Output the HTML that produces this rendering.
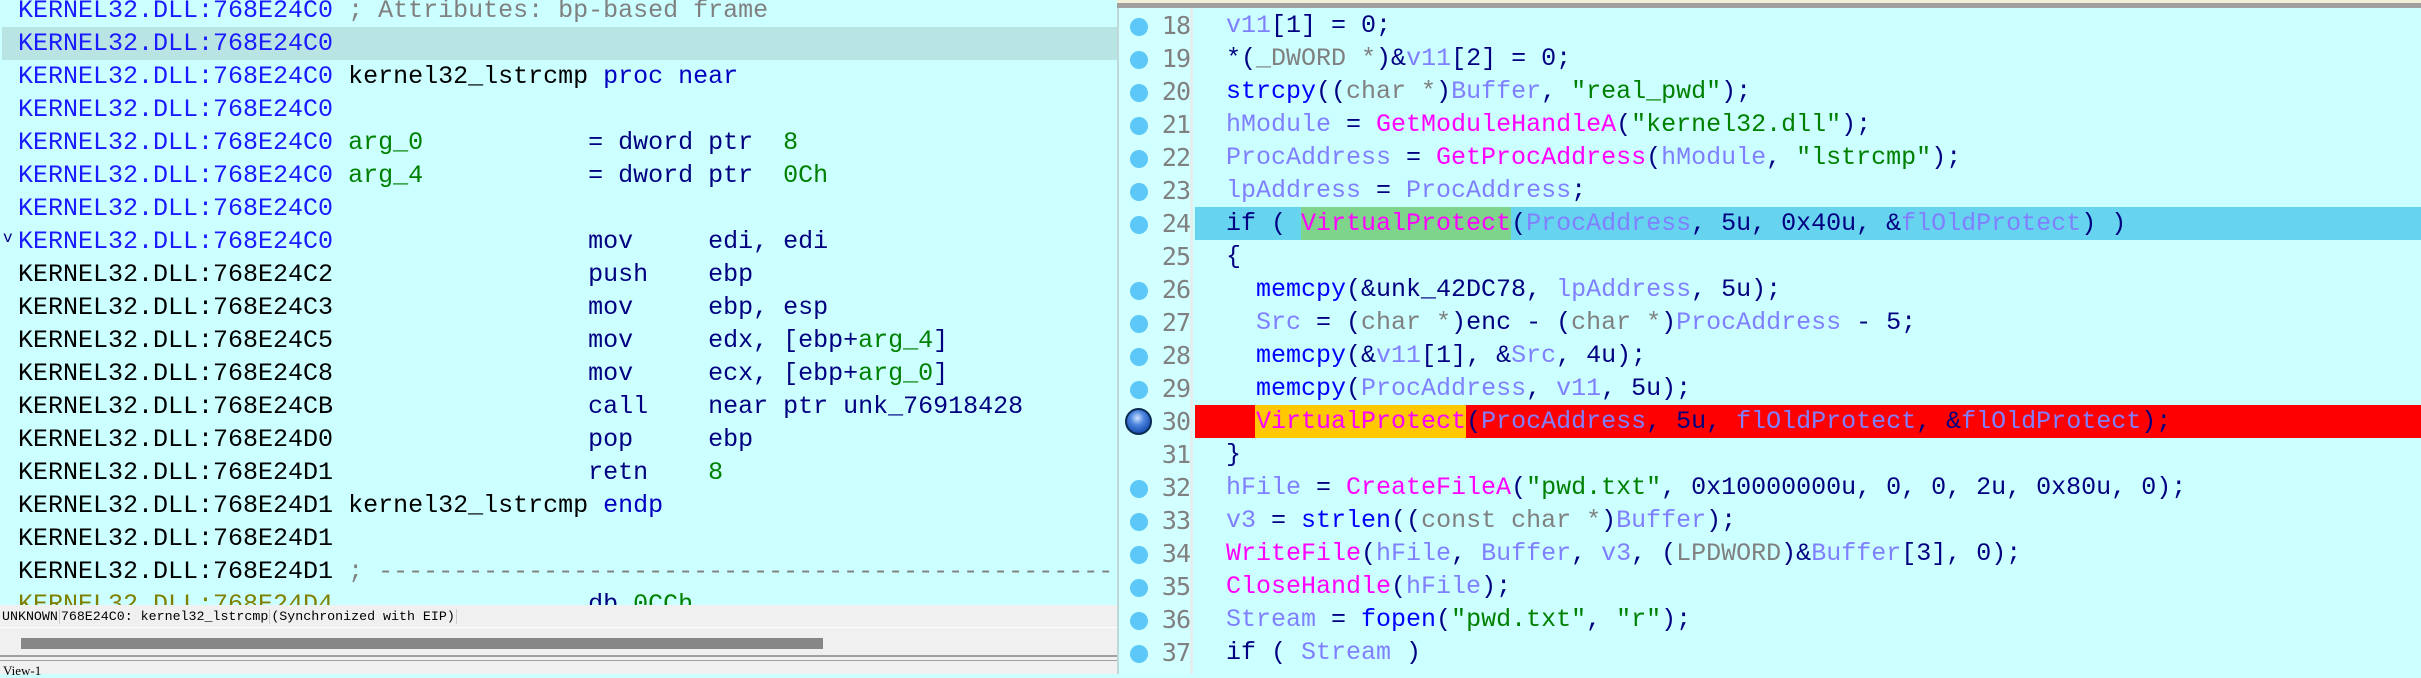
<!DOCTYPE html>
<html><head><meta charset="utf-8"><style>
*{margin:0;padding:0;box-sizing:border-box}
body{width:2421px;height:674px;overflow:hidden;background:#ccffff;position:relative;font-family:"Liberation Mono",monospace}
.r{position:absolute;height:33px;line-height:33px;font-size:25px;white-space:pre;}
.b{color:#1a1aff}.k{color:#000}.g{color:#008000}.n{color:#000080}.gr{color:#808080}.o{color:#808000}.p{color:#0000c0}
.v{color:#8080ff}.m{color:#ff00ff}.f{color:#0000ff}.s{color:#008000}.t{color:#808080}.c{color:#000080}
.ln{position:absolute;left:1158px;width:32px;height:33px;line-height:33px;font-size:25px;color:#808080;text-align:right;font-family:"DejaVu Sans Mono","Liberation Mono",monospace;letter-spacing:-1px}
.dot{position:absolute;left:1130px;width:18px;height:18px;border-radius:50%;background:#5cc8f8}
.code{position:absolute;left:1226px;height:33px;line-height:33px;font-size:25px;white-space:pre;color:#000080}
</style></head><body>
<!-- left pane -->
<div style="position:absolute;left:0;top:0;width:1117px;height:605px;background:#ccffff"></div>
<div style="position:absolute;left:2px;top:27px;width:1115px;height:33px;background:#b8e4e4"></div>
<div class="r" style="left:18px;top:-6px"><span class="b">KERNEL32.DLL:768E24C0</span> <span class="gr">; Attributes: bp-based frame</span></div>
<div class="r" style="left:18px;top:27px"><span class="b">KERNEL32.DLL:768E24C0</span></div>
<div class="r" style="left:18px;top:60px"><span class="b">KERNEL32.DLL:768E24C0</span> <span class="k">kernel32_lstrcmp</span> <span class="p">proc near</span></div>
<div class="r" style="left:18px;top:93px"><span class="b">KERNEL32.DLL:768E24C0</span></div>
<div class="r" style="left:18px;top:126px"><span class="b">KERNEL32.DLL:768E24C0</span> <span class="g">arg_0</span>           <span class="n">= dword ptr  </span><span class="g">8</span></div>
<div class="r" style="left:18px;top:159px"><span class="b">KERNEL32.DLL:768E24C0</span> <span class="g">arg_4</span>           <span class="n">= dword ptr  </span><span class="g">0Ch</span></div>
<div class="r" style="left:18px;top:192px"><span class="b">KERNEL32.DLL:768E24C0</span></div>
<div class="r" style="left:3px;top:222px;font-size:16px;color:#000080">v</div>
<div class="r" style="left:18px;top:225px"><span class="b">KERNEL32.DLL:768E24C0</span>                 <span class="n">mov     edi, edi</span></div>
<div class="r" style="left:18px;top:258px"><span class="k">KERNEL32.DLL:768E24C2</span>                 <span class="n">push    ebp</span></div>
<div class="r" style="left:18px;top:291px"><span class="k">KERNEL32.DLL:768E24C3</span>                 <span class="n">mov     ebp, esp</span></div>
<div class="r" style="left:18px;top:324px"><span class="k">KERNEL32.DLL:768E24C5</span>                 <span class="n">mov     edx, [ebp+</span><span class="g">arg_4</span><span class="n">]</span></div>
<div class="r" style="left:18px;top:357px"><span class="k">KERNEL32.DLL:768E24C8</span>                 <span class="n">mov     ecx, [ebp+</span><span class="g">arg_0</span><span class="n">]</span></div>
<div class="r" style="left:18px;top:390px"><span class="k">KERNEL32.DLL:768E24CB</span>                 <span class="n">call    near ptr unk_76918428</span></div>
<div class="r" style="left:18px;top:423px"><span class="k">KERNEL32.DLL:768E24D0</span>                 <span class="n">pop     ebp</span></div>
<div class="r" style="left:18px;top:456px"><span class="k">KERNEL32.DLL:768E24D1</span>                 <span class="n">retn    </span><span class="g">8</span></div>
<div class="r" style="left:18px;top:489px"><span class="k">KERNEL32.DLL:768E24D1</span> <span class="k">kernel32_lstrcmp</span> <span class="p">endp</span></div>
<div class="r" style="left:18px;top:522px"><span class="k">KERNEL32.DLL:768E24D1</span></div>
<div class="r" style="left:18px;top:555px"><span class="k">KERNEL32.DLL:768E24D1</span> <span class="gr">; -----------------------------------------------------</span></div>
<div class="r" style="left:18px;top:588px"><span class="o">KERNEL32.DLL:768E24D4</span>                 <span class="n">db </span><span class="g">0CCh</span></div>
<!-- status -->
<div style="position:absolute;left:0;top:605px;width:1117px;height:69px;background:#f0f0f0"></div>
<div style="position:absolute;left:2px;top:607px;height:20px;line-height:20px;font-size:13.3px;white-space:pre;color:#000;font-family:'Liberation Mono',monospace">UNKNOWN<span style="border-left:1px solid #ccc;margin:0 1px"></span>768E24C0: kernel32_lstrcmp<span style="border-left:1px solid #ccc;margin:0 1px"></span>(Synchronized with EIP)<span style="border-left:1px solid #ccc;margin:0 1px"></span></div>
<div style="position:absolute;left:0;top:627px;width:1117px;height:1px;background:#fff"></div>
<div style="position:absolute;left:21px;top:638px;width:802px;height:11px;background:#878787"></div>
<div style="position:absolute;left:0;top:655px;width:1117px;height:2px;background:#a0a0a0"></div>
<div style="position:absolute;left:0;top:660px;width:1117px;height:1px;background:#a0a0a0"></div>
<div style="position:absolute;left:3px;top:664px;font-size:13px;line-height:14px;font-family:'Liberation Serif',serif">View-1</div>
<!-- right pane -->
<div style="position:absolute;left:1117px;top:0;width:1304px;height:674px;background:#ccffff;border-left:2px solid #c0d8d8"></div>
<div style="position:absolute;left:1117px;top:0;width:1304px;height:3px;background:#f4efd8"></div>
<div style="position:absolute;left:1117px;top:3px;width:1304px;height:5px;background:#a0a0a0"></div>
<div style="position:absolute;left:1119px;top:8px;width:71px;height:666px;background:#d2ffff"></div>
<div style="position:absolute;left:1190px;top:8px;width:3px;height:666px;background:#e4eeee"></div>
<div style="position:absolute;left:1195px;top:207px;width:1226px;height:33px;background:#66d4ee"></div>
<div style="position:absolute;left:1301px;top:207px;width:210px;height:33px;background:#7ed48a"></div>
<div style="position:absolute;left:1195px;top:405px;width:1226px;height:33px;background:#ff0000"></div>
<div style="position:absolute;left:1255px;top:405px;width:211px;height:33px;background:#ffc800"></div>

<div class="dot" style="top:18px"></div><div class="ln" style="top:9px">18</div>
<div class="dot" style="top:51px"></div><div class="ln" style="top:42px">19</div>
<div class="dot" style="top:84px"></div><div class="ln" style="top:75px">20</div>
<div class="dot" style="top:117px"></div><div class="ln" style="top:108px">21</div>
<div class="dot" style="top:150px"></div><div class="ln" style="top:141px">22</div>
<div class="dot" style="top:183px"></div><div class="ln" style="top:174px">23</div>
<div class="dot" style="top:216px"></div><div class="ln" style="top:207px">24</div>
<div class="ln" style="top:240px">25</div>
<div class="dot" style="top:282px"></div><div class="ln" style="top:273px">26</div>
<div class="dot" style="top:315px"></div><div class="ln" style="top:306px">27</div>
<div class="dot" style="top:348px"></div><div class="ln" style="top:339px">28</div>
<div class="dot" style="top:381px"></div><div class="ln" style="top:372px">29</div>
<div style="position:absolute;left:1125px;top:408px;width:27px;height:27px;border-radius:50%;background:radial-gradient(circle at 45% 35%,#cfe4ff 0,#4d86e0 35%,#1a4fb0 75%,#0c2a60 100%);border:2px solid #0a2a50"></div><div class="ln" style="top:405px">30</div>
<div class="ln" style="top:438px">31</div>
<div class="dot" style="top:480px"></div><div class="ln" style="top:471px">32</div>
<div class="dot" style="top:513px"></div><div class="ln" style="top:504px">33</div>
<div class="dot" style="top:546px"></div><div class="ln" style="top:537px">34</div>
<div class="dot" style="top:579px"></div><div class="ln" style="top:570px">35</div>
<div class="dot" style="top:612px"></div><div class="ln" style="top:603px">36</div>
<div class="dot" style="top:645px"></div><div class="ln" style="top:636px">37</div>

<div class="code" style="top:9px"><span class="v">v11</span>[1] = 0;</div>
<div class="code" style="top:42px">*(<span class="t">_DWORD *</span>)&amp;<span class="v">v11</span>[2] = 0;</div>
<div class="code" style="top:75px"><span class="f">strcpy</span>((<span class="t">char *</span>)<span class="v">Buffer</span>, <span class="s">"real_pwd"</span>);</div>
<div class="code" style="top:108px"><span class="v">hModule</span> = <span class="m">GetModuleHandleA</span>(<span class="s">"kernel32.dll"</span>);</div>
<div class="code" style="top:141px"><span class="v">ProcAddress</span> = <span class="m">GetProcAddress</span>(<span class="v">hModule</span>, <span class="s">"lstrcmp"</span>);</div>
<div class="code" style="top:174px"><span class="v">lpAddress</span> = <span class="v">ProcAddress</span>;</div>
<div class="code" style="top:207px">if ( <span class="m">VirtualProtect</span>(<span class="v">ProcAddress</span>, 5u, 0x40u, &amp;<span class="v">flOldProtect</span>) )</div>
<div class="code" style="top:240px">{</div>
<div class="code" style="top:273px">  <span class="f">memcpy</span>(&amp;unk_42DC78, <span class="v">lpAddress</span>, 5u);</div>
<div class="code" style="top:306px">  <span class="v">Src</span> = (<span class="t">char *</span>)enc - (<span class="t">char *</span>)<span class="v">ProcAddress</span> - 5;</div>
<div class="code" style="top:339px">  <span class="f">memcpy</span>(&amp;<span class="v">v11</span>[1], &amp;<span class="v">Src</span>, 4u);</div>
<div class="code" style="top:372px">  <span class="f">memcpy</span>(<span class="v">ProcAddress</span>, <span class="v">v11</span>, 5u);</div>
<div class="code" style="top:405px">  <span class="m">VirtualProtect</span>(<span class="v">ProcAddress</span>, 5u, <span class="v">flOldProtect</span>, &amp;<span class="v">flOldProtect</span>);</div>
<div class="code" style="top:438px">}</div>
<div class="code" style="top:471px"><span class="v">hFile</span> = <span class="m">CreateFileA</span>(<span class="s">"pwd.txt"</span>, 0x10000000u, 0, 0, 2u, 0x80u, 0);</div>
<div class="code" style="top:504px"><span class="v">v3</span> = <span class="f">strlen</span>((<span class="t">const char *</span>)<span class="v">Buffer</span>);</div>
<div class="code" style="top:537px"><span class="m">WriteFile</span>(<span class="v">hFile</span>, <span class="v">Buffer</span>, <span class="v">v3</span>, (<span class="t">LPDWORD</span>)&amp;<span class="v">Buffer</span>[3], 0);</div>
<div class="code" style="top:570px"><span class="m">CloseHandle</span>(<span class="v">hFile</span>);</div>
<div class="code" style="top:603px"><span class="v">Stream</span> = <span class="f">fopen</span>(<span class="s">"pwd.txt"</span>, <span class="s">"r"</span>);</div>
<div class="code" style="top:636px">if ( <span class="v">Stream</span> )</div>
</body></html>
